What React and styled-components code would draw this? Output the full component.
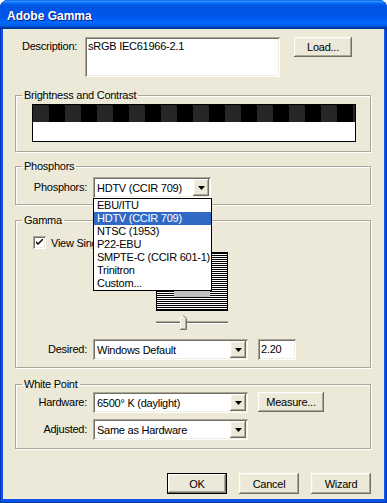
import React from "react"
import styled, { createGlobalStyle } from "styled-components"

const GlobalStyle = createGlobalStyle`
    html, body {
        margin: 0;
        background: #ffffff;
    }
    body {
        font-family: "Liberation Sans", Arial, sans-serif;
        font-size: 11px;
        letter-spacing: -0.25px;
        color: #000000;
    }
`

const Window = styled.div`
    width: 387px;
    height: 503px;
    display: flex;
    flex-direction: column;
    border-radius: 8px 8px 0 0;
    overflow: hidden;
    background: #0A54E6;
    box-shadow: inset 1px 0 #0033B8, inset -1px 0 #0033B8, inset 0 -1px #0033B8;
`

const TitleBar = styled.div`
    height: 29px;
    flex: none;
    display: flex;
    align-items: center;
    padding: 2px 0 0 7px;
    box-sizing: border-box;
    background: linear-gradient(to bottom, #0058ee 0%, #3593ff 4%, #288eff 6%, #127dff 8%, #036ffc 10%, #0262ee 14%, #0057e5 20%, #0054e3 24%, #0055eb 56%, #005bf5 66%, #026afe 76%, #0062ef 86%, #0052d6 92%, #0040ab 94%, #003092 100%);
`

const Title = styled.span`
    font-family: "Liberation Sans", Arial, sans-serif;
    font-weight: 700;
    font-size: 12px;
    letter-spacing: 0;
    color: #ffffff;
    text-shadow: 1px 1px #0A1883;
`

const Body = styled.div`
    flex: 1;
    margin: 0 3px 4px;
    padding: 8px 13px 0 12px;
    background: #ECE9D8;
    display: flex;
    flex-direction: column;
`

const DescRow = styled.div`
    display: flex;
    align-items: flex-start;
    padding-left: 7px;
`

const DescLabel = styled.span`
    width: 63px;
    padding-top: 3px;
    line-height: 13px;
    white-space: nowrap;
`

const sunken = `
    box-sizing: border-box;
    background: #ffffff;
    box-shadow: inset 1px 1px #ACA899, inset -1px -1px #ffffff, inset 2px 2px #716F64, inset -2px -2px #F1EFE2;
`

const raised = `
    box-sizing: border-box;
    background: #ECE9D8;
    box-shadow: inset -1px -1px #716F64, inset 1px 1px #ffffff, inset -2px -2px #ACA899, inset 2px 2px #F1EFE2;
`

const TextArea = styled.div`
    ${sunken}
    width: 195px;
    height: 40px;
    padding: 3px 3px;
    line-height: 13px;
`

const Button = styled.div`
    ${raised}
    width: ${p => p.$w}px;
    height: ${p => p.$h || 21}px;
    margin-left: ${p => p.$ml || 0}px;
    display: flex;
    align-items: center;
    justify-content: center;
    flex: none;
    ${p => p.$default && `
        border: 1px solid #000000;
    `}
`

const Group = styled.fieldset`
    margin: ${p => p.$mt}px 0 0;
    padding: 0;
    min-width: 0;
    border: 1px solid #ACA899;
    box-shadow: 1px 1px #ffffff, inset 1px 1px #ffffff;
`

const Legend = styled.legend`
    margin-left: 6px;
    padding: 0 2px;
    line-height: 13px;
    font-size: 11px;
`

const GroupBody = styled.div`
    padding: ${p => p.$pad};
    display: flex;
    flex-direction: column;
    gap: ${p => p.$gap || 0}px;
`

const ContrastBar = styled.div`
    width: 324px;
    height: 38px;
    box-sizing: border-box;
    border: 1px solid #000000;
    display: flex;
    flex-direction: column;
`

const CheckerStrip = styled.div`
    height: 17px;
    background: repeating-linear-gradient(to right, #262626 0 16px, #000000 16px 32px);
`

const WhiteStrip = styled.div`
    flex: 1;
    background: #ffffff;
`

const FieldRow = styled.div`
    display: flex;
    align-items: flex-start;
    margin-top: ${p => p.$mt || 0}px;
`

const FieldLabel = styled.span`
    width: 71px;
    margin-right: 6px;
    text-align: right;
    line-height: 21px;
    white-space: nowrap;
`

const ComboBox = styled.div`
    ${sunken}
    position: relative;
    width: ${p => p.$w}px;
    height: 21px;
    padding: 2px;
    display: flex;
    align-items: center;
    flex: none;
`

const ComboText = styled.span`
    flex: 1;
    padding-left: 2px;
    white-space: nowrap;
    overflow: hidden;
`

const ArrowButton = styled.div`
    ${raised}
    width: 16px;
    height: 17px;
    display: flex;
    align-items: center;
    justify-content: center;
`

const DropList = styled.div`
    position: absolute;
    top: 100%;
    left: 0;
    width: 119px;
    box-sizing: border-box;
    border: 1px solid #000000;
    background: #ffffff;
    z-index: 10;
`

const DropItem = styled.div`
    height: 13px;
    line-height: 13px;
    padding-left: 3px;
    white-space: nowrap;
    background: ${p => (p.$selected ? "#316AC5" : "transparent")};
    color: ${p => (p.$selected ? "#ffffff" : "#000000")};
`

const CheckRow = styled.div`
    display: flex;
    align-items: center;
    gap: 5px;
    padding-left: 17px;
    height: 13px;
    white-space: nowrap;
`

const CheckBox = styled.div`
    ${sunken}
    width: 13px;
    height: 13px;
    display: flex;
    align-items: center;
    justify-content: center;
    flex: none;
`

const Preview = styled.div`
    margin: 3px 0 0 140px;
    width: 72px;
    height: 59px;
    box-sizing: border-box;
    border: 1px solid #000000;
    background: repeating-linear-gradient(to bottom, #000000 0 1px, #ffffff 1px 2px);
    display: flex;
    align-items: center;
    justify-content: center;
`

const PreviewPatch = styled.div`
    width: 36px;
    height: 31px;
    background: #C0C0C0;
`

const Slider = styled.svg`
    display: block;
    margin: 4px 0 0 140px;
`

const ValueBox = styled.div`
    ${sunken}
    width: 38px;
    height: 21px;
    margin-left: 10px;
    padding: 2px 3px;
    line-height: 17px;
`

const ButtonRow = styled.div`
    display: flex;
    justify-content: flex-end;
    gap: 12px;
    margin-top: 24px;
`

const Arrow = () => (
    <svg width="7" height="4" viewBox="0 0 7 4">
        <polygon points="0,0 7,0 3.5,4" fill="#000" />
    </svg>
)

const Combo = ({ value, width, children }) => (
    <ComboBox $w={width}>
        <ComboText>{value}</ComboText>
        <ArrowButton><Arrow /></ArrowButton>
        {children}
    </ComboBox>
)

const phosphorOptions = [
    "EBU/ITU",
    "HDTV (CCIR 709)",
    "NTSC (1953)",
    "P22-EBU",
    "SMPTE-C (CCIR 601-1)",
    "Trinitron",
    "Custom...",
]

const App = () => {
    return (
        <>
            <GlobalStyle />
            <Window>
                <TitleBar>
                    <Title>Adobe Gamma</Title>
                </TitleBar>
                <Body>
                    <DescRow>
                        <DescLabel>Description:</DescLabel>
                        <TextArea>sRGB IEC61966-2.1</TextArea>
                        <Button $w={58} $h={20} $ml={14}>Load...</Button>
                    </DescRow>

                    <Group $mt={12}>
                        <Legend>Brightness and Contrast</Legend>
                        <GroupBody $pad="2px 14px 9px 16px">
                            <ContrastBar>
                                <CheckerStrip />
                                <WhiteStrip />
                            </ContrastBar>
                        </GroupBody>
                    </Group>

                    <Group $mt={8}>
                        <Legend>Phosphors</Legend>
                        <GroupBody $pad="4px 0 6px 0">
                            <FieldRow>
                                <FieldLabel>Phosphors:</FieldLabel>
                                <Combo value="HDTV (CCIR 709)" width={118}>
                                    <DropList>
                                        {phosphorOptions.map(opt => (
                                            <DropItem key={opt} $selected={opt === "HDTV (CCIR 709)"}>{opt}</DropItem>
                                        ))}
                                    </DropList>
                                </Combo>
                            </FieldRow>
                        </GroupBody>
                    </Group>

                    <Group $mt={9}>
                        <Legend>Gamma</Legend>
                        <GroupBody $pad="9px 0 7px 0">
                            <CheckRow>
                                <CheckBox>
                                    <svg width="7" height="7" viewBox="0 0 7 7">
                                        <path d="M0 2 L0 4 L2 6 L7 1 L7 -1 L2 4 Z" fill="#000" />
                                    </svg>
                                </CheckBox>
                                View Single Gamma Only
                            </CheckRow>
                            <Preview>
                                <PreviewPatch />
                            </Preview>
                            <Slider width="72" height="15" viewBox="0 0 72 15">
                                <rect x="0" y="6" width="72" height="1" fill="#ACA899" />
                                <rect x="0" y="7" width="72" height="1" fill="#716F64" />
                                <rect x="0" y="8" width="72" height="1" fill="#ffffff" />
                                <polygon points="24,3 27,0 30,3 30,14 24,14" fill="#ECE9D8" />
                                <polyline points="24.5,14 24.5,3.2 27.2,0.5" fill="none" stroke="#ffffff" />
                                <polyline points="27.2,0.5 30.5,3.5 30.5,14.5 24,14.5" fill="none" stroke="#716F64" />
                                <polyline points="29.5,4 29.5,13.5 25,13.5" fill="none" stroke="#ACA899" />
                            </Slider>
                            <FieldRow $mt={9}>
                                <FieldLabel>Desired:</FieldLabel>
                                <Combo value="Windows Default" width={155} />
                                <ValueBox>2.20</ValueBox>
                            </FieldRow>
                        </GroupBody>
                    </Group>

                    <Group $mt={10}>
                        <Legend>White Point</Legend>
                        <GroupBody $pad="1px 0 8px 0" $gap={6}>
                            <FieldRow>
                                <FieldLabel>Hardware:</FieldLabel>
                                <Combo value="6500° K (daylight)" width={155} />
                                <Button $w={66} $h={20} $ml={10}>Measure...</Button>
                            </FieldRow>
                            <FieldRow>
                                <FieldLabel>Adjusted:</FieldLabel>
                                <Combo value="Same as Hardware" width={155} />
                            </FieldRow>
                        </GroupBody>
                    </Group>

                    <ButtonRow>
                        <Button $w={60} $default>OK</Button>
                        <Button $w={60}>Cancel</Button>
                        <Button $w={60}>Wizard</Button>
                    </ButtonRow>
                </Body>
            </Window>
        </>
    )
}

export default App
